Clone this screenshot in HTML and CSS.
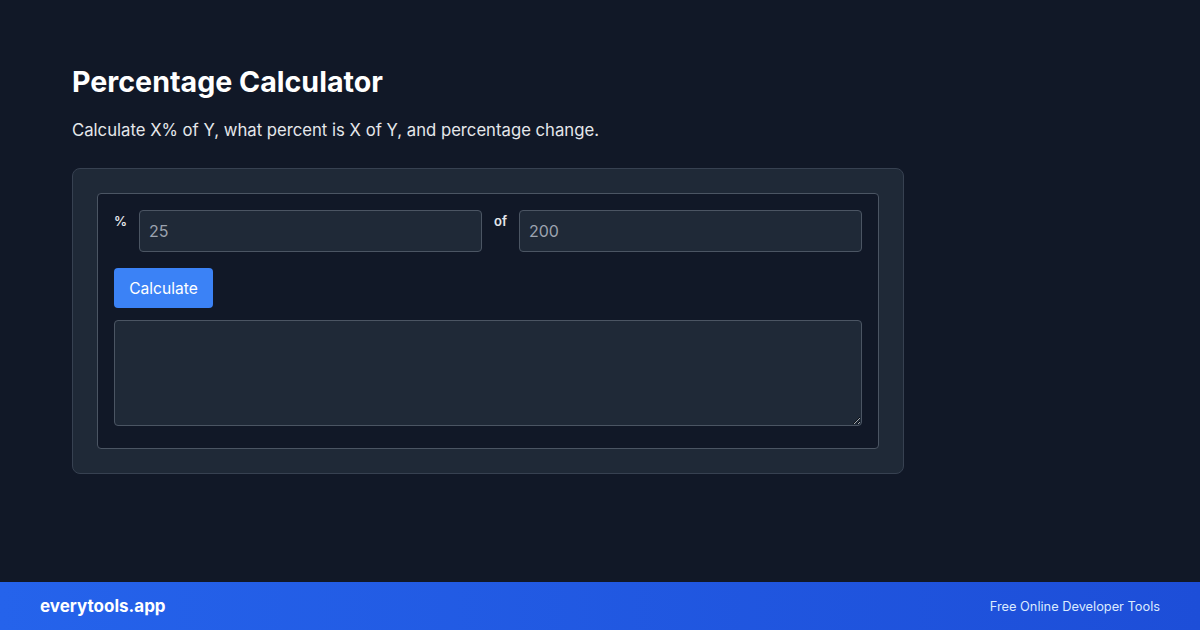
FILE: index.html
```html
<!DOCTYPE html>
<html lang="en">

<head>
    <meta charset="UTF-8">
    <meta name="viewport" content="width=device-width, initial-scale=1.0">
    <title>Percentage Calculator</title>
    <link rel="stylesheet" href="styles.css">
</head>

<body>
    <main class="page">
        <h1 class="title">Percentage Calculator</h1>
        <p class="subtitle">Calculate X% of Y, what percent is X of Y, and percentage change.</p>

        <section class="card">
            <div class="tool">
                <div class="row">
                    <label class="label" for="pct">%</label>
                    <input type="text" id="pct" class="input-field" placeholder="25">
                    <label class="label" for="total">of</label>
                    <input type="text" id="total" class="input-field" placeholder="200">
                </div>
                <button class="btn" id="calcBtn">Calculate</button>
                <textarea class="output" id="output" readonly></textarea>
            </div>
        </section>
    </main>

    <footer class="footer">
        <span class="brand">everytools.app</span>
        <span class="tagline">Free Online Developer Tools</span>
    </footer>
</body>

</html>
```

FILE: styles.css
```css
* {
    box-sizing: border-box;
}

html, body {
    height: 100%;
}

body {
    margin: 0;
    font-family: 'Inter', 'Liberation Sans', sans-serif;
    background-color: #111827;
    color: #f3f4f6;
    display: flex;
    flex-direction: column;
    overflow: hidden;
}

.page {
    flex: 1;
    padding: 64px 72px 0;
}

.title {
    margin: 0;
    font-size: 28.6px;
    line-height: 36px;
    font-weight: 700;
    color: #ffffff;
}

.subtitle {
    margin: 18px 0 0;
    font-size: 16.7px;
    line-height: 24px;
    color: #e5e7eb;
}

.card {
    margin-top: 26px;
    width: 832px;
    padding: 24px;
    background-color: #1f2937;
    border: 1px solid #374151;
    border-radius: 8px;
}

.tool {
    padding: 16px 16px 22px;
    background-color: #111827;
    border: 1px solid #4b5563;
    border-radius: 4px;
}

.row {
    display: flex;
    align-items: flex-start;
    gap: 12px;
}

.label {
    font-size: 13px;
    font-weight: 600;
    line-height: 18px;
    padding-top: 2px;
    color: #e5e7eb;
}

.input-field {
    flex: 1;
    min-width: 0;
    height: 42px;
    padding: 0 9px;
    font-family: inherit;
    font-size: 16px;
    color: #e5e7eb;
    background-color: #1f2937;
    border: 1px solid #4b5563;
    border-radius: 4px;
    outline: none;
}

.input-field::placeholder {
    color: #9ca3af;
}

.btn {
    display: block;
    margin-top: 16px;
    height: 40px;
    width: 99px;
    padding: 0;
    font-family: inherit;
    font-size: 15.6px;
    color: #ffffff;
    background-color: #3b82f6;
    border: none;
    border-radius: 4px;
    cursor: pointer;
}

.output {
    display: block;
    margin-top: 12px;
    width: 100%;
    height: 106px;
    font-family: inherit;
    background-color: #1f2937;
    border: 1px solid #4b5563;
    border-radius: 4px;
    color: #e5e7eb;
}

.footer {
    height: 48px;
    flex-shrink: 0;
    display: flex;
    align-items: center;
    justify-content: space-between;
    padding: 0 40px;
    background: linear-gradient(90deg, #2563eb, #1d4ed8);
}

.brand {
    font-size: 17px;
    font-weight: 700;
    color: #ffffff;
}

.tagline {
    font-size: 12.8px;
    color: #dbeafe;
}
```
